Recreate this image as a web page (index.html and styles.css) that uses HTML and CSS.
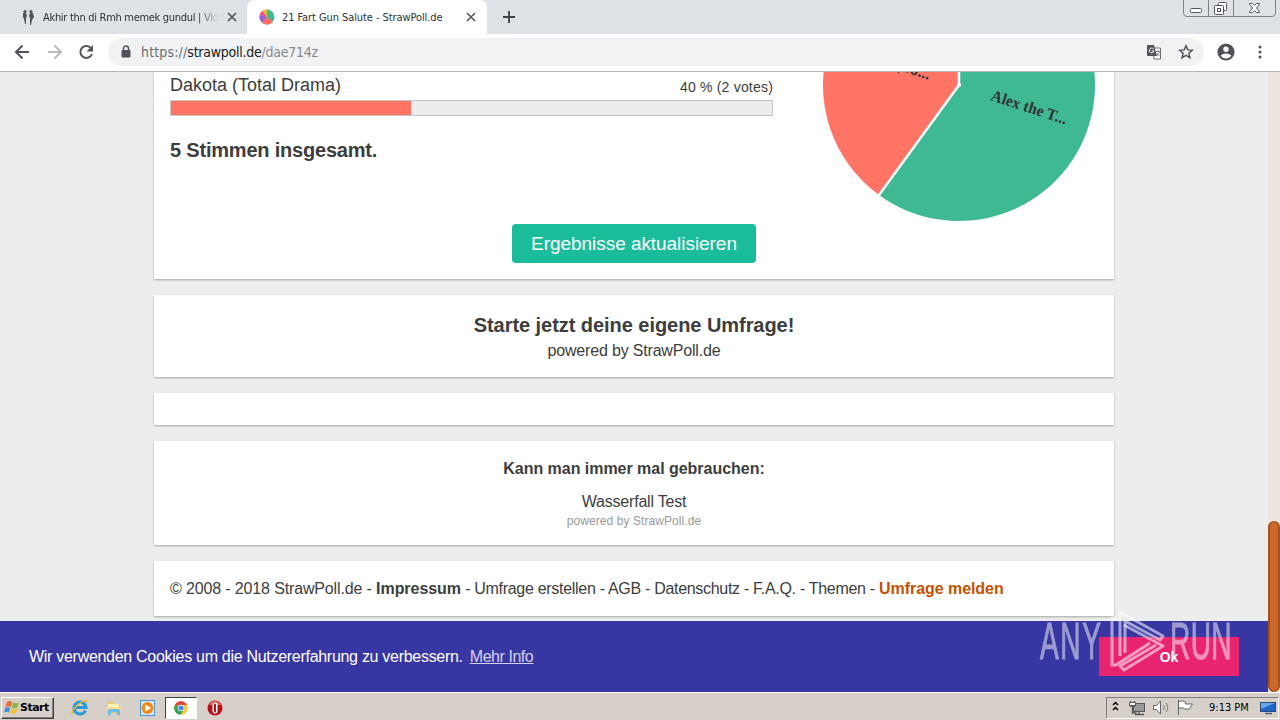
FILE: index.html
```html
<!DOCTYPE html>
<html lang="de">
<head>
  <meta charset="utf-8">
  <title>21 Fart Gun Salute - StrawPoll.de</title>
  <link rel="stylesheet" href="styles.css">
</head>
<body>
  <div class="tabs">
    <div class="tab">
      <svg class="favicon" width="16" height="16" viewBox="0 0 16 16" fill="#50545a">
        <circle cx="5" cy="2.500" r="1.600"/><circle cx="11" cy="2.500" r="1.600"/>
        <path d="M3 4h3l1 3-1 2v6H5L4 10 3 8zM10 4h3l1 4-2 3-1 5h-1V9L9 7z"/>
      </svg>
      <span class="tab-title faded">Akhir thn di Rmh memek gundul | Vid</span>
      <svg class="close" width="10" height="10" viewBox="0 0 10 10"><path d="M1 1l8 8M9 1l-8 8" stroke="#50545a" stroke-width="1.700"/></svg>
    </div>
    <div class="tab active">
      <svg class="favicon" width="16" height="16" viewBox="0 0 16 16">
        <circle cx="8" cy="8" r="7.500" fill="#3fb992"/>
        <path d="M8 8L14 12.500A7.500 7.500 0 0 1 3 13.600z" fill="#ff6f61"/>
        <path d="M8 8L3 13.600A7.500 7.500 0 0 1 1 5.500z" fill="#a55dd0"/>
        <path d="M8 8L1 5.500A7.500 7.500 0 0 1 8 .5z" fill="#eeb72d"/>
        <path d="M8 8L1 5.500A7.500 7.500 0 0 1 3.300 2.100z" fill="#e64fa0"/>
      </svg>
      <span class="tab-title active-title">21 Fart Gun Salute - StrawPoll.de</span>
      <svg class="close" width="10" height="10" viewBox="0 0 10 10"><path d="M1 1l8 8M9 1l-8 8" stroke="#50545a" stroke-width="1.500"/></svg>
    </div>
    <svg class="new-tab" width="12" height="12" viewBox="0 0 12 12"><path d="M6 0v12M0 6h12" stroke="#3c4043" stroke-width="1.800"/></svg>
    <svg class="window-buttons" width="94" height="17" viewBox="0 0 94 17" fill="none" stroke="#7f838b">
      <path d="M.5 0v13q0 3.500 3.500 3.500h85q3.500 0 3.500-3.500V0M25.500 0v16M50.500 0v16"/>
      <g stroke="#50545c" fill="#fff">
        <rect x="7.500" y="8.500" width="11" height="4" rx="1"/>
        <rect x="35.500" y="2.500" width="8" height="8" rx="1"/>
        <rect x="31.500" y="5.500" width="9" height="9" rx="1"/>
        <rect x="34.500" y="8.500" width="3" height="3"/>
        <path d="M66.500 3.500h3l2 2 2-2h3v1l-3 3.500 3 3.500v1h-3l-2-2-2 2h-3v-1l3-3.500-3-3.500z"/>
      </g>
    </svg>
  </div>

  <div class="toolbar">
    <svg class="nav" width="100" height="20" viewBox="0 0 100 20" fill="none" stroke="#50545a" stroke-width="2">
      <path d="M21 10H8M14.500 3.500L8 10l6.500 6.500"/>
      <path d="M40 10h13M46.500 3.500L53 10l-6.500 6.500" stroke="#b9bbbe"/>
      <path d="M82.600 5.700A6 6 0 1 0 84 12"/>
      <path d="M85 3v6.500H78.500z" fill="#50545a" stroke="none"/>
    </svg>
    <div class="omnibox">
      <svg class="lock" width="10" height="13" viewBox="0 0 10 13"><path d="M2.500 6V3.500a2.500 2.500 0 0 1 5 0V6" fill="none" stroke="#50545a" stroke-width="1.500"/><rect x="0.500" y="5" width="9" height="7.500" rx="1" fill="#50545a"/></svg>
      <span class="url"><span class="scheme">https://</span><b>strawpoll.de</b>/dae714z</span>
      <svg class="translate" width="16" height="16" viewBox="0 0 16 16">
        <path d="M7 4h7.500v11H8z" fill="#fff" stroke="#6a6e73"/>
        <path d="M2 1h6l3 11H2q-1 0-1-1V2q0-1 1-1z" fill="#50545a"/>
        <path d="M7.600 5A2.400 2.400 0 1 0 8 7H5.700" fill="none" stroke="#fff"/>
        <path d="M10 7.500h4M12 6v1.500M13.500 8q-1 3-3 4M10.500 9l3 3" fill="none" stroke="#6a6e73" stroke-width=".8"/>
      </svg>
      <svg class="star" width="16" height="16" viewBox="0 0 16 16"><path d="M8 1.800l1.800 4.100 4.500.4-3.400 3 1 4.400L8 11.400l-3.900 2.300 1-4.400-3.400-3 4.500-.4z" fill="none" stroke="#50545a" stroke-width="1.500"/></svg>
    </div>
    <svg class="profile" width="18" height="18" viewBox="0 0 18 18"><circle cx="9" cy="9" r="8.600" fill="#50545a"/><circle cx="9" cy="6.200" r="2.700" fill="#fff"/><path d="M3.700 12.500Q6 10.500 9 10.500t5.300 2Q12.500 15.500 9 15.500t-5.300-3z" fill="#fff"/></svg>
    <svg class="dots" width="4" height="14" viewBox="0 0 4 14" fill="#50545a"><circle cx="2" cy="2" r="1.500"/><circle cx="2" cy="7" r="1.500"/><circle cx="2" cy="12" r="1.500"/></svg>
  </div>

  <div class="viewport">
    <div class="page">
      <div class="card results">
        <div class="row">
          <div class="bars">
            <div class="answer">
              <span class="answer-name">Dakota (Total Drama)</span>
              <span class="votes">40 % (2 votes)</span>
            </div>
            <div class="bar"><div class="fill" style="width: 40%"></div></div>
            <h2 class="total">5 Stimmen insgesamt.</h2>
          </div>
          <svg class="pie" width="274" height="150" viewBox="0 0 274 150">
            <path d="M137 13V-123A136 136 0 1 1 57.060 123.030z" fill="#3fb993"/>
            <path d="M137 13L57.060 123.030A136 136 0 0 1 137 -123z" fill="#ff7464"/>
            <path d="M137 -5V13L57 123" fill="none" stroke="#fff" stroke-width="2.500"/>
            <circle cx="137" cy="13" r="2" fill="#fff"/>
            <text class="slice" transform="translate(168 28) rotate(18)" textLength="79" lengthAdjust="spacingAndGlyphs">Alex the T...</text>
            <text class="slice" transform="translate(21 -20) rotate(18)" textLength="90" lengthAdjust="spacingAndGlyphs">Dakota (To...</text>
          </svg>
        </div>
        <button class="refresh">Ergebnisse aktualisieren</button>
      </div>

      <div class="card start">
        <h2>Starte jetzt deine eigene Umfrage!</h2>
        <p class="powered">powered by StrawPoll.de</p>
      </div>

      <div class="card empty"></div>

      <div class="card tips">
        <h3>Kann man immer mal gebrauchen:</h3>
        <p class="tip">Wasserfall Test</p>
        <p class="tip-source">powered by StrawPoll.de</p>
      </div>

      <div class="card footer"><span class="copyright">© 2008 - 2018 StrawPoll.de - </span><b>Impressum</b> - Umfrage erstellen - AGB - Datenschutz - F.A.Q. - Themen - <b class="report">Umfrage melden</b></div>
    </div>
    <div class="scrollbar"><div class="thumb"></div></div>

    <div class="cookies">
      <span class="cookie-text">Wir verwenden Cookies um die Nutzererfahrung zu verbessern.</span>
      <a class="more">Mehr Info</a>
      <button class="ok">Ok</button>
    </div>

    <svg class="watermark" width="200" height="66" viewBox="0 0 200 66">
      <g class="mark-text">
        <text transform="translate(3 50) scale(.54 1)" textLength="113">ANY</text>
        <text transform="translate(133 50) scale(.54 1)" textLength="114">RUN</text>
      </g>
      <g fill="none" stroke="#fff" stroke-opacity=".55" stroke-width="3" stroke-linejoin="round">
        <path d="M83 47V3l43 24-3 4-35-19v32"/>
        <path d="M87 16l39 21-39 24-4-4 36-21"/>
        <path d="M80 11l-5-2v47h4l34-22"/>
      </g>
    </svg>
  </div>

  <div class="taskbar">
    <div class="start-button">
      <svg width="16" height="15" viewBox="0 0 16 15">
        <path d="M3 2q3-2 5 0L6.500 7Q4 5.500 1.500 7z" fill="#ef6537"/>
        <path d="M9 2.500q3 1.500 6 0L13.500 7.500q-3 1.500-6 0z" fill="#87b944"/>
        <path d="M1.200 8q2.500-1.500 5 0L5 12.500q-2.500-1.500-5 0z" fill="#3e91d3"/>
        <path d="M7.200 8.500q3 1.500 6 0L12 13q-3 1.500-6 0z" fill="#f5c12e"/>
      </svg>
      <span>Start</span>
    </div>
    <svg class="launch" width="18" height="18" viewBox="0 0 18 18">
      <path d="M14.500 11.500A6 6 0 1 1 15 8.500H5" fill="none" stroke="#269bdc" stroke-width="3"/>
      <path d="M1.500 15.500Q-.5 12 7 5.500 15-.5 16.500 3" fill="none" stroke="#edb526" stroke-width="1.500"/>
    </svg>
    <svg class="launch" width="18" height="18" viewBox="0 0 18 18">
      <path d="M2 3h6l1 2h6v9H2z" fill="#e9ca68"/>
      <path d="M3 5h11v3H3z" fill="#fff3b5"/>
      <path d="M2 8h14v3H2z" fill="#f8df89"/>
      <path d="M3 16v-4q0-2 2-2h8q2 0 2 2v4h-3v-3H6v3z" fill="#68bde4"/>
    </svg>
    <svg class="launch" width="18" height="18" viewBox="0 0 18 18">
      <rect x="1.500" y="1.500" width="14" height="15" fill="#d5eafa" stroke="#489bd8"/>
      <circle cx="8.500" cy="9" r="6" fill="#f58a1c"/>
      <path d="M6.500 5.500L12 9l-5.500 3.500z" fill="#fff"/>
    </svg>
    <div class="running">
      <svg width="14" height="14" viewBox="0 0 14 14">
        <circle cx="7" cy="7" r="6.800" fill="#f5ca35"/>
        <path d="M7 7L1 3.700A6.800 6.800 0 0 1 13 4H7z" fill="#df463b"/>
        <path d="M7 7L1 3.700A6.800 6.800 0 0 0 6.400 13.800L9.500 9z" fill="#39a355"/>
        <circle cx="7" cy="7" r="3.300" fill="#fff"/><circle cx="7" cy="7" r="2.600" fill="#4888ef"/>
      </svg>
    </div>
    <svg class="opera" width="16" height="16" viewBox="0 0 16 16"><circle cx="8" cy="8" r="7.500" fill="#b71218"/><path d="M2 5a6.500 6.500 0 0 1 12 0z" fill="#dd6560"/><rect x="5.500" y="2.500" width="5" height="11" rx="2.500" fill="#fff"/><rect x="7" y="3.500" width="2" height="9" rx="1" fill="#b71218"/></svg>
    <div class="tray">
      <svg width="88" height="18" viewBox="0 0 88 18" fill="none">
        <path d="M6 6l2.500-2.500L11 6M6 11l2.500-2.500L11 11" stroke="#000" stroke-width="1.500"/>
        <g stroke="#55575a"><rect x="26.500" y="4.500" width="11" height="8" fill="#999"/><path d="M28 15.500h9M32 13v2M23.500 2v5h4V2M25.500 7v7h4" stroke-width="1.300"/><path d="M22.500 3.500h6v3h-6z" fill="#fff"/></g>
        <path d="M46.500 6.500h3L53.500 2v13l-4-4.500h-3z" fill="#fff" stroke="#666"/>
        <path d="M56.500 6q2 2.500 0 5M59 4q3.500 4.500 0 9" stroke="#777"/>
        <path d="M71.500 1v15M71.500 2.500q4-1.500 7 .5v2h7L82.500 10h-5l-1-1h-5" fill="#fff" stroke="#666"/>
      </svg>
      <span class="clock">9:13 PM</span>
      <svg class="monitor" width="16" height="14" viewBox="0 0 16 14"><rect x=".5" y="1.500" width="15" height="9" fill="#1e65c8" stroke="#274a7c"/><path d="M1 2h14L1 8z" fill="#65a5e8"/><path d="M5 12.500h7" stroke="#4d6384" stroke-width="1.500"/></svg>
    </div>
  </div>
</body>
</html>
```
FILE: styles.css
```css
* {
  box-sizing: border-box;
}

body {
  margin: 0;
  width: 1280px;
  height: 720px;
  overflow: hidden;
  font-family: "Liberation Sans", Arial, sans-serif;
  color: #3d3d3d;
}

svg {
  display: block;
  flex: none;
}

h2, h3, p {
  margin: 0;
}

/* browser */
.tabs {
  display: flex;
  height: 34px;
  background: #dee1e6;
}

.tab {
  display: flex;
  align-items: center;
  width: 247px;
  padding: 0 10px 0 20px;
}

.tab.active {
  width: 240px;
  padding: 0 11px 0 12px;
  background: #fff;
  border-radius: 8px 8px 0 0;
}

.tab-title {
  width: 176px;
  margin-left: 7px;
  font: 11px "DejaVu Sans Condensed", "DejaVu Sans", sans-serif;
  letter-spacing: -0.3px;
  color: #2f3235;
  white-space: nowrap;
  overflow: hidden;
}

.active-title {
  letter-spacing: -0.08px;
}

.faded {
  -webkit-mask-image: linear-gradient(to right, #000 88%, transparent);
  mask-image: linear-gradient(to right, #000 88%, transparent);
}

.close {
  margin-left: auto;
}

.new-tab {
  margin: 11px 0 0 16px;
}

.window-buttons {
  margin-left: auto;
  margin-right: 3px;
}

.toolbar {
  display: flex;
  align-items: center;
  height: 38px;
  padding: 0 18px 2px 8px;
  background: #fff;
  border-bottom: 1px solid #b5b7b5;
}

.omnibox {
  display: flex;
  align-items: center;
  width: 1096px;
  height: 28px;
  padding: 0 10px 0 13px;
  background: #f0f2f4;
  border-radius: 14px;
}

.url {
  margin-left: 10px;
  font: 14px "DejaVu Sans Condensed", "DejaVu Sans", sans-serif;
  letter-spacing: -0.25px;
  color: #85898e;
}

.scheme {
  letter-spacing: 0.15px;
  color: #6c7075;
}

.url b {
  font-weight: 400;
  color: #202124;
}

.translate {
  margin-left: auto;
}

.star {
  margin-left: 16px;
}

.profile {
  margin-left: 13px;
}

.dots {
  margin-left: auto;
}

/* page */
.viewport {
  position: relative;
  display: flex;
  height: 620px;
  background: #ededed;
  overflow: hidden;
}

.page {
  display: flex;
  flex-direction: column;
  gap: 16px;
  width: 960px;
  margin-left: 154px;
}

.card {
  flex: none;
  background: #fff;
  box-shadow: 0 1px 2px rgba(0, 0, 0, 0.3);
  text-align: center;
}

.results {
  height: 207px;
  padding: 0 16px;
}

.row {
  display: flex;
  gap: 49px;
  height: 152px;
}

.bars {
  width: 603px;
  text-align: left;
}

.answer {
  display: flex;
  justify-content: space-between;
  align-items: baseline;
  height: 28px;
  padding-top: 3px;
}

.answer-name {
  font-size: 18px;
  line-height: 21px;
}

.votes {
  position: relative;
  top: 1px;
  font-size: 14px;
  letter-spacing: 0.2px;
}

.bar {
  height: 16px;
  background: #ededed;
  border: 1px solid #c4c4c4;
}

.fill {
  height: 14px;
  background: #ff7464;
}

.total {
  margin-top: 22px;
  font-size: 20px;
  line-height: 24px;
  letter-spacing: -0.2px;
}

.slice {
  font: bold 16px "Liberation Serif", serif;
  fill: #333;
}

.refresh {
  display: block;
  width: 244px;
  height: 39px;
  margin: 0 auto;
  padding: 0;
  border: none;
  border-radius: 4px;
  background: #1abc9c;
  color: #fff;
  font: 19px "Liberation Sans", Arial, sans-serif;
  letter-spacing: -0.05px;
}

.start {
  height: 82px;
  padding-top: 18px;
}

.start h2 {
  font-size: 20px;
  line-height: 24px;
  letter-spacing: -0.05px;
}

.powered {
  margin-top: 4px;
  font-size: 16px;
  line-height: 20px;
  letter-spacing: -0.18px;
}

.empty {
  height: 32px;
}

.tips {
  height: 104px;
  padding-top: 18px;
}

.tips h3 {
  font-size: 16px;
  line-height: 20px;
  letter-spacing: -0.03px;
}

.tip {
  margin-top: 13px;
  font-size: 16px;
  line-height: 20px;
  letter-spacing: -0.2px;
}

.tip-source {
  font-size: 12px;
  line-height: 18px;
  letter-spacing: 0.08px;
  color: #999;
}

.footer {
  height: 55px;
  padding: 0 16px;
  font-size: 16px;
  line-height: 55px;
  letter-spacing: -0.3px;
  text-align: left;
  white-space: nowrap;
}

.copyright {
  letter-spacing: -0.14px;
}

.footer b {
  letter-spacing: -0.05px;
}

.report {
  color: #c75000;
}

.scrollbar {
  width: 12px;
  margin-left: auto;
  padding-top: 449px;
  background: #ece5df;
  position: relative;
  z-index: 2;
}

.thumb {
  height: 171px;
  background: #cb692c;
  border: 1px solid #a64f1d;
  border-width: 1px 2px;
  border-radius: 6px;
}

.cookies {
  position: absolute;
  left: 0;
  bottom: 0;
  display: flex;
  align-items: center;
  width: 1268px;
  height: 71px;
  padding: 0 29px;
  background: #3836a3;
  color: #fff;
  font-size: 16px;
}

.cookie-text {
  letter-spacing: -0.29px;
}

.more {
  margin-left: 7px;
  color: #d3d2ef;
  letter-spacing: -0.45px;
  text-decoration: underline;
}

.ok {
  width: 140px;
  height: 39px;
  margin-left: auto;
  border: none;
  background: #e82471;
  color: #fff;
  font: bold 14px "Liberation Sans", Arial, sans-serif;
}

.watermark {
  position: absolute;
  left: 1037px;
  top: 537px;
}

.mark-text {
  font: 52px "Liberation Sans", Arial, sans-serif;
  fill: #fff;
  stroke: #fff;
  stroke-width: 1px;
  opacity: 0.5;
}

/* taskbar */
.taskbar {
  display: flex;
  align-items: center;
  height: 28px;
  padding: 2px 1px 0 1px;
  background: #d6d0c8;
  border-top: 1px solid #fff;
}

.start-button {
  display: flex;
  align-items: center;
  width: 53px;
  height: 22px;
  padding-left: 2px;
  border: 1px solid;
  border-color: #fff #404040 #404040 #fff;
  box-shadow: inset -1px -1px #808080;
  font: bold 11px "DejaVu Sans", sans-serif;
  letter-spacing: -0.5px;
  color: #000;
}

.launch {
  margin-left: 16px;
}

.start-button + .launch {
  margin-left: 17px;
}

.running {
  display: flex;
  align-items: center;
  justify-content: center;
  width: 32px;
  height: 22px;
  margin-left: 8px;
  background: #fff;
  border: 1px solid;
  border-color: #404040 #fff #fff #404040;
}

.opera {
  margin-left: 10px;
}

.tray {
  display: flex;
  align-items: center;
  width: 173px;
  height: 22px;
  margin-left: auto;
  border: 1px solid;
  border-color: #808080 #fff #fff #808080;
}

.clock {
  margin-left: 14px;
  font: 11px "DejaVu Sans Condensed", "DejaVu Sans", sans-serif;
  color: #000;
  white-space: nowrap;
}

.monitor {
  margin-left: auto;
  margin-right: 2px;
}
```
